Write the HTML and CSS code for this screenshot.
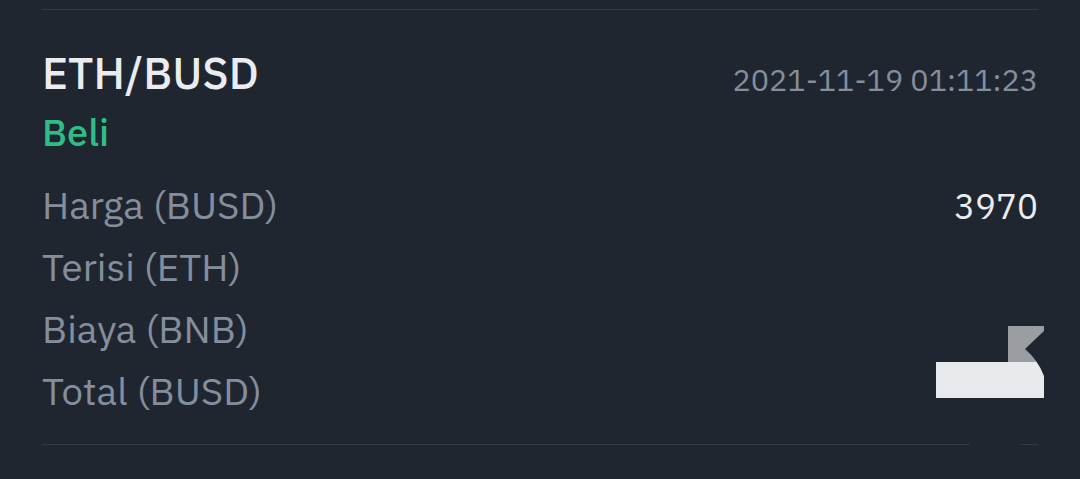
FILE: index.html
```html
<!DOCTYPE html>
<html lang="id">
<head>
<meta charset="utf-8">
<link rel="stylesheet" href="styles.css">
</head>
<body>
<div class="page">
  <div class="divider top"></div>
  <div class="card">
    <div class="head">
      <div class="pair">ETH/BUSD</div>
      <div class="date">2021-11-19 01:11:23</div>
    </div>
    <div class="side">Beli</div>
    <div class="rows">
      <div class="row"><span class="label">Harga (BUSD)</span><span class="value">3970</span></div>
      <div class="row"><span class="label">Terisi (ETH)</span><span class="value"></span></div>
      <div class="row"><span class="label">Biaya (BNB)</span><span class="value"></span></div>
      <div class="row"><span class="label">Total (BUSD)</span><span class="value"></span></div>
    </div>
  </div>
  <div class="divider bottom"></div>
  <svg class="redact" width="1080" height="479" viewBox="0 0 1080 479">
    <rect x="1008" y="326" width="36" height="36" fill="#9a9da2"/>
    <rect x="936" y="362" width="108" height="36" fill="#e9eaed"/>
    <path d="M1044 331 L1025 349 Q1038 360 1044 376 Z" fill="#1f2630"/>
    <rect x="970" y="440" width="50" height="6" fill="#1f2630"/>
  </svg>
</div>
</body>
</html>
```
FILE: styles.css
```css
html, body {
  margin: 0;
  padding: 0;
  background: #1f2630;
}
.page {
  position: relative;
  width: 1080px;
  height: 479px;
  overflow: hidden;
  padding: 9px 42px 0;
  box-sizing: border-box;
  font-family: "IBM Plex Sans", Roboto, "Noto Sans", sans-serif;
}
.divider {
  height: 1px;
  background: #343a44;
}
.card {
  padding-top: 37px;
  padding-bottom: 22px;
}
.head {
  display: flex;
  justify-content: space-between;
  align-items: baseline;
}
.pair {
  font-size: 44px;
  font-weight: 500;
  color: #eaecef;
  line-height: 52px;
}
.date {
  font-size: 30.5px;
  color: #848e9c;
  line-height: 52px;
  position: relative;
  top: 2px;
}
.side {
  font-size: 38px;
  font-weight: 500;
  color: #2ebd85;
  line-height: 52px;
  margin-top: 2px;
}
.rows {
  margin-top: 16px;
  display: flex;
  flex-direction: column;
}
.row {
  display: flex;
  justify-content: space-between;
  align-items: baseline;
  height: 62px;
  line-height: 62px;
}
.label {
  font-size: 38.5px;
  color: #848e9c;
}
.value {
  font-size: 35px;
  color: #eaecef;
}
.redact {
  position: absolute;
  left: 0;
  top: 0;
}
```
